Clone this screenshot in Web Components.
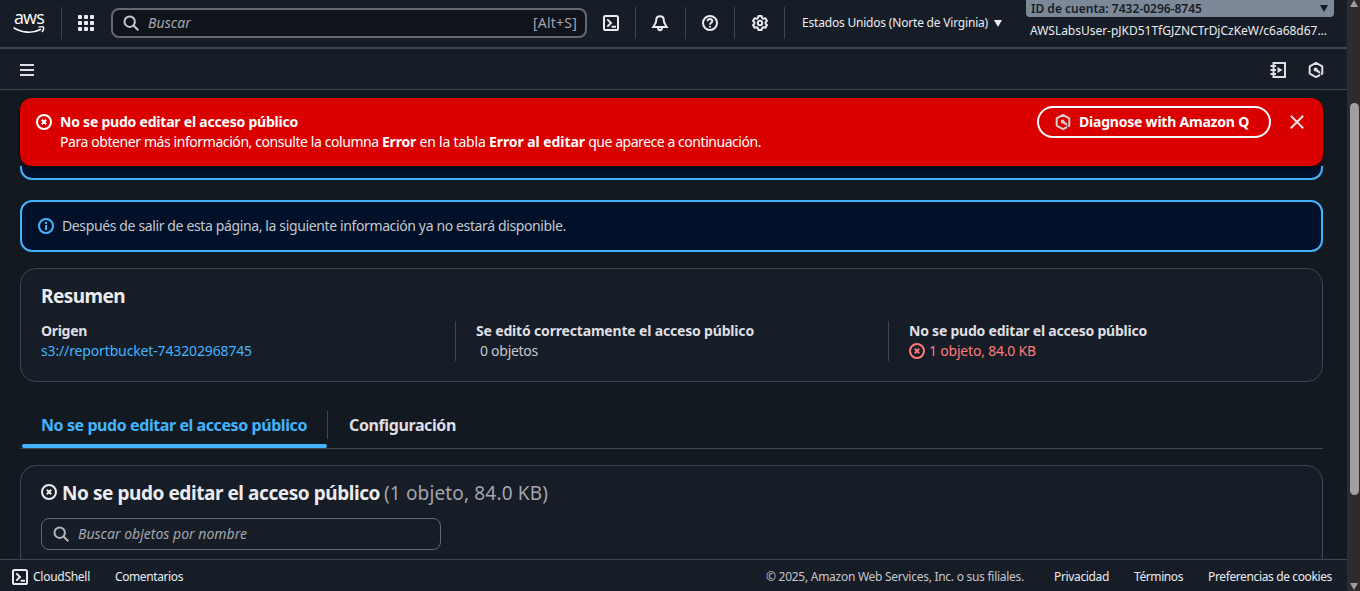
<!DOCTYPE html>
<html lang="es">
<head>
<meta charset="utf-8">
<title>Amazon S3</title>
<style>
html,body{margin:0;height:100%;overflow:hidden;background:#131920}
body{font-family:"Noto Sans","Open Sans",sans-serif;font-size:14px;line-height:20px;color:#c6c6cd}
</style>
</head>
<body>
<console-app></console-app>
<script>
const define=(name,html,after)=>{
  const t=document.createElement('template');t.innerHTML=html;
  customElements.define(name,class extends HTMLElement{
    constructor(){super();this.attachShadow({mode:'open'}).append(t.content.cloneNode(true));}
    connectedCallback(){if(after)after(this);}
  });
};

/* Tracks its text so that the run takes the given width. */
define('fit-text',`<style>:host{display:inline-block;white-space:nowrap;flex:none}span{display:inline-block}</style><span><slot></slot></span>`,el=>{
  const w=+el.getAttribute('w'),s=el.shadowRoot.querySelector('span');
  const n=el.textContent.length;
  s.style.letterSpacing='0px';
  const natural=s.getBoundingClientRect().width;
  s.style.letterSpacing=((w-natural)/n)+'px';
  el.style.width=w+'px';
});

const icons={
  error:'<circle cx="8" cy="8" r="7"/><path d="M5.8 5.8l4.4 4.4M10.2 5.8l-4.4 4.4"/>',
  info:'<circle cx="8" cy="8" r="7"/><path d="M8 4v2M8 7v5"/>',
  search:'<circle cx="6.7" cy="6.7" r="5.2"/><path d="M10.5 10.5L15.3 15.3"/>',
  shell:'<rect x="1" y="1" width="14" height="14" rx="1.6"/><path d="M4.3 4.4L8 8l-3.7 3.6M8.6 11.8H13"/>',
  bell:'<path d="M8 1.2C5.4 1.2 4.2 3 4.2 5.2C4.2 8.6 2.6 9.4 1.2 12H14.8C13.4 9.4 11.8 8.6 11.8 5.2C11.8 3 10.6 1.2 8 1.2zM6 12.5C6 16 10 16 10 12.5"/>',
  help:'<circle cx="8" cy="8" r="7"/><path d="M5.6 6.3C5.7 3.2 10.5 3.5 10.3 6.2C10.2 7.8 8 7.8 8 9.7M8 10.9v1.6"/>',
  gear:'<path d="M6.4 1h3.2l.5 2 1.3.8 2-.6 1.6 2.7L13.6 7.300v1.400L15 10.100l-1.600 2.700-2-.6-1.300.8-.5 2H6.400l-.5-2-1.300-.8-2 .6L1 10.100 2.400 8.700V7.300L1 5.900l1.600-2.700 2 .6L5.900 3z" stroke-linejoin="round"/><circle cx="8" cy="8" r="2.200"/>',
  menu:'<path d="M1 3h14M1 8h14M1 13h14"/>',
  close:'<path d="M1.800 1.800l12.400 12.400M14.200 1.800L1.800 14.200"/>',
  q:'<path d="M12 13L8 15.100 1.700 11.600V4.400L8 .9l6.300 3.500v7.200L12.800 12.500" stroke-linejoin="round"/><path d="M7.500 7.500L12 10.800" stroke-width="2.200"/><circle cx="7.600" cy="7.600" r="1" fill="currentColor"/>',
  notebook:'<path d="M3.500 3V1H15v14H3.500v-2M3.500 5v2M3.500 9v2M.5 4h5.500M.5 8h5.500M.5 12h5.500"/><path d="M7.500 5L12.500 8 7.500 11z" fill="currentColor" stroke="none"/>',
  apps:'<g fill="currentColor" stroke="none">'+[0,6,12].map(y=>[0,6,12].map(x=>`<rect x="${x}" y="${y}" width="4" height="4" rx=".8"/>`).join('')).join('')+'</g>'
};
define('ui-icon',`<style>:host{display:block;width:16px;height:16px;flex:none}svg{display:block;width:100%;height:100%;overflow:visible}</style><svg viewBox="0 0 16 16" fill="none" stroke="currentColor" stroke-width="2"></svg>`,el=>{
  const s=el.shadowRoot.querySelector('svg');
  s.innerHTML=icons[el.getAttribute('name')];
  if(el.hasAttribute('stroke'))s.setAttribute('stroke-width',el.getAttribute('stroke'));
});

define('aws-logo',`<style>:host{display:block;width:32px;height:22px;flex:none;color:#fff}b{display:block;font:500 18px/13px "Open Sans",sans-serif;letter-spacing:-.8px;text-align:center;height:15px;margin-top:-1px}svg{display:block;width:32px;height:9px;margin-top:-1px;overflow:visible}</style><b>aws</b><svg viewBox="0 0 32 9" fill="none" stroke="currentColor" stroke-width="1.600"><path d="M.6 2.600C9 8.200 20 8.600 28 4.200"/><path d="M25.500 2.200C28 1.500 30 1.500 30.600 2.200C31 3.500 30.200 5.500 29 7" stroke-width="1.400"/></svg>`);

define('top-nav',`<style>
:host{display:flex;height:47px;border-bottom:2px solid #424650;background:#161d26;color:#ebebf0;align-items:flex-start;flex:none}
i.d{width:1px;height:32px;background:#424650;margin-top:7px;flex:none}
ui-icon{margin-top:15px}
aws-logo{margin:12px 16px 0 13px}
.search{display:flex;align-items:center;box-sizing:border-box;width:476px;height:30px;margin:8px 16px 0 17px;border:2px solid #656871;border-radius:8px;background:#0f141a;color:#a4a4ad;padding:0 8px 0 10px}
.search ui-icon{margin:0 9px 0 0;color:#c6c6cd}
.search .k{margin-left:auto;font-size:14px}
.region{display:flex;align-items:center;margin:13px 0 0 17px;font-size:12px;gap:6px}
.car{width:0;height:0;border:4px solid transparent;border-top:7px solid;border-bottom:0}
.acct{margin-left:24px;width:308px;font-size:12px}
.id{display:flex;align-items:center;justify-content:space-between;height:17px;background:#7d8998;color:#161d26;border-radius:0 0 4px 4px;padding:0 6px 0 5px;box-sizing:border-box;font-weight:600}
.user{padding:4px 0 0 4px}
</style>
<aws-logo></aws-logo><i class="d"></i>
<ui-icon name="apps" style="margin-left:16px"></ui-icon>
<div class="search"><ui-icon name="search"></ui-icon><fit-text w="43" style="font-style:italic">Buscar</fit-text><fit-text class="k" w="44">[Alt+S]</fit-text></div>
<ui-icon name="shell"></ui-icon><i class="d" style="margin-left:16px"></i>
<ui-icon name="bell" style="margin-left:16px"></ui-icon><i class="d" style="margin-left:17px"></i>
<ui-icon name="help" style="margin-left:16px"></ui-icon><i class="d" style="margin-left:16px"></i>
<ui-icon name="gear" style="margin-left:17px"></ui-icon><i class="d" style="margin-left:16px"></i>
<div class="region"><fit-text w="186">Estados Unidos (Norte de Virginia)</fit-text><span class="car"></span></div>
<div class="acct"><div class="id"><fit-text w="171">ID de cuenta: 7432-0296-8745</fit-text><span class="car"></span></div><div class="user"><fit-text w="297">AWSLabsUser-pJKD51TfGJZNCTrDjCzKeW/c6a68d67...</fit-text></div></div>`);

define('tool-bar',`<style>:host{display:flex;align-items:center;box-sizing:border-box;height:41px;border-bottom:1px solid #424650;background:#161d26;color:#dedee3;padding:2px 23px 0 19px;gap:22px;flex:none}ui-icon:first-of-type{margin-right:auto}</style><ui-icon name="menu"></ui-icon><ui-icon name="notebook"></ui-icon><ui-icon name="q"></ui-icon>`);

define('error-banner',`<style>
:host{display:flex;box-sizing:border-box;height:68px;background:#db0000;border-radius:12px;color:#fff;padding:8px 18px 0 16px;align-items:flex-start;box-shadow:0 2px 5px #0006;position:relative;z-index:1}
.t{margin:6px auto 0 8px}.t div{height:20px}h4{margin:0;height:20px;font-size:14px;font-weight:700}
.btn{display:flex;align-items:center;box-sizing:border-box;width:234px;height:32px;border:2px solid #fff;border-radius:16px;padding-left:16px;gap:8px;font-weight:700;margin-right:18px}
.btn ui-icon{color:#d8cdd2}
</style>
<ui-icon name="error" style="margin-top:8px"></ui-icon>
<div class="t"><h4><fit-text w="238">No se pudo editar el acceso público</fit-text></h4><div><fit-text w="322">Para obtener más información, consulte la columna&nbsp;</fit-text><fit-text w="34"><b>Error</b></fit-text><fit-text w="73">&nbsp;en la tabla&nbsp;</fit-text><fit-text w="96"><b>Error al editar</b></fit-text><fit-text w="176">&nbsp;que aparece a continuación.</fit-text></div></div>
<div class="btn"><ui-icon name="q"></ui-icon><fit-text w="170">Diagnose with Amazon Q</fit-text></div>
<ui-icon name="close" style="margin-top:8px;color:#ebdfe4"></ui-icon>`);

define('info-box',`<style>:host{display:flex;box-sizing:border-box;height:52px;margin-top:20px;border:2px solid #42b4ff;border-radius:12px;background:#001129;align-items:center;padding-left:16px;gap:8px}ui-icon{color:#42b4ff}</style><ui-icon name="info"></ui-icon><slot></slot>`);

define('ui-card',`<style>:host{display:block;box-sizing:border-box;border:1px solid #424650;border-radius:16px;background:#161d26;padding:0 20px}</style><slot></slot>`);

define('kv-pair',`<style>:host{display:block;height:40px;box-sizing:border-box}.l{font-weight:700;height:20px;color:#dedee3}.v{height:20px;display:flex;align-items:center}</style><div class="l"><slot name="label"></slot></div><div class="v"><slot></slot></div>`);

define('summary-card',`<style>
:host{display:block;margin-top:16px}ui-card{height:114px}
h2{margin:0;padding-top:15px;height:24px;line-height:24px;font-size:19px;color:#ebebf0;font-weight:700}
.g{display:grid;grid-template-columns:414px 433px 1fr;margin-top:13px}
kv-pair+kv-pair{border-left:1px solid #424650;padding-left:20px}
.e{color:#ff7a7a;margin-right:4px}
</style>
<ui-card><h2><fit-text w="84">Resumen</fit-text></h2>
<div class="g"><kv-pair><fit-text slot="label" w="46">Origen</fit-text><fit-text w="211" style="color:#42b4ff">s3://reportbucket-743202968745</fit-text></kv-pair>
<kv-pair><fit-text slot="label" w="278">Se editó correctamente el acceso público</fit-text><fit-text w="58" style="margin-left:4px">0 objetos</fit-text></kv-pair>
<kv-pair><fit-text slot="label" w="238">No se pudo editar el acceso público</fit-text><ui-icon name="error" class="e"></ui-icon><fit-text w="107" style="color:#ff7a7a">1 objeto, 84.0 KB</fit-text></kv-pair></div></ui-card>`);

define('tab-strip',`<style>
:host{display:flex;margin-top:22px;height:44px;border-bottom:1px solid #424650;font-size:16px;font-weight:700;color:#dedee3}
.a{box-sizing:border-box;width:305px;margin-left:2px;padding:11px 0 0 19px;color:#42b4ff;position:relative;height:44px}
.a::after{content:"";position:absolute;left:0;right:0;bottom:0;height:4px;border-radius:2px;background:#42b4ff}
.b{box-sizing:border-box;margin-top:7px;height:28px;border-left:1px solid #424650;padding:4px 0 0 21px}
</style><div class="a"><fit-text w="266">No se pudo editar el acceso público</fit-text></div><div class="b"><fit-text w="107">Configuración</fit-text></div>`);

define('failed-card',`<style>
:host{display:block;margin-top:16px}ui-card{height:200px}
h2{margin:0;display:flex;align-items:center;padding-top:15px;height:24px;font-size:19px;color:#ebebf0}
.s{display:flex;align-items:center;box-sizing:border-box;width:400px;height:32px;margin-top:13px;border:1px solid #656871;border-radius:8px;padding-left:11px;gap:9px;color:#a4a4ad;font-style:italic}
.s ui-icon{color:#b4b4bb}
</style><ui-card><h2><ui-icon name="error" style="margin:-2px 5px 0 0"></ui-icon><fit-text w="318">No se pudo editar el acceso público</fit-text><fit-text w="164" style="font-weight:400;color:#a4a4ad;margin-left:4px">(1 objeto, 84.0 KB)</fit-text></h2>
<div class="s"><ui-icon name="search"></ui-icon><fit-text w="169">Buscar objetos por nombre</fit-text></div></ui-card>`);

define('page-footer',`<style>:host{display:flex;align-items:center;box-sizing:border-box;height:32px;flex:none;border-top:1px solid #424650;background:#161d26;color:#ebebf0;font-size:12px;padding:2px 15px 0 12px}</style>
<ui-icon name="shell" style="margin-right:5px"></ui-icon><fit-text w="57">CloudShell</fit-text><fit-text w="68" style="margin-left:25px">Comentarios</fit-text>
<fit-text w="258" style="margin-left:auto;color:#c6c6cd">© 2025, Amazon Web Services, Inc. o sus filiales.</fit-text><fit-text w="55" style="margin-left:30px">Privacidad</fit-text><fit-text w="49" style="margin-left:25px">Términos</fit-text><fit-text w="124" style="margin-left:25px">Preferencias de cookies</fit-text>`);

define('scroll-bar',`<style>:host{display:flex;flex-direction:column;align-items:center;box-sizing:border-box;width:13px;background:#2c2c2c;flex:none}
.u,.w{width:0;height:0;border:4.500px solid transparent}.u{border-bottom:7px solid #9f9f9f;border-top:0;margin-left:1px}.w{border-top:7px solid #9f9f9f;border-bottom:0;margin:auto 0 1px 1px}
.t{width:9px;height:392px;margin:96px 0 0 1px;border-radius:5px;background:#9f9f9f}</style><div class="u"></div><div class="t"></div><div class="w"></div>`);

define('console-app',`<style>
:host{display:flex;height:591px;width:1360px;overflow:hidden}
.p{display:flex;flex-direction:column;width:1347px;height:591px}
main{flex:1;min-height:0;overflow:hidden;padding:8px 24px 0 20px}
.tail{box-sizing:border-box;height:14px;border:2px solid #42b4ff;border-top:0;border-radius:0 0 12px 12px;background:#001129}
</style><div class="p"><top-nav></top-nav><tool-bar></tool-bar>
<main><error-banner></error-banner><div class="tail"></div>
<info-box><fit-text w="504">Después de salir de esta página, la siguiente información ya no estará disponible.</fit-text></info-box>
<summary-card></summary-card><tab-strip></tab-strip><failed-card></failed-card></main>
<page-footer></page-footer></div><scroll-bar></scroll-bar>`);
</script>
</body>
</html>
